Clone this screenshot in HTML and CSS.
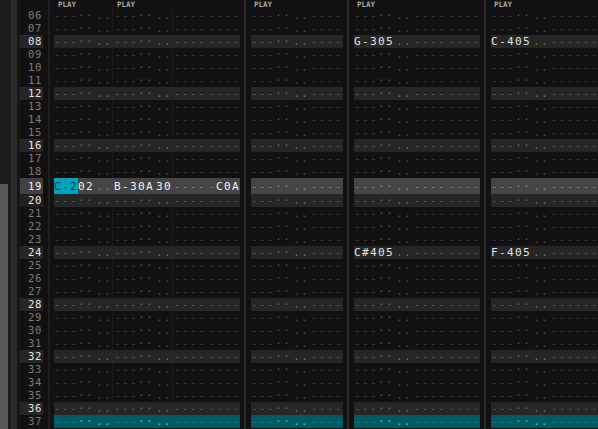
FILE: index.html
```html
<!DOCTYPE html>
<html>
<head>
<meta charset="utf-8">
<link rel="stylesheet" href="styles.css">
</head>
<body>
<div class="app">
  <div class="gut">
    <div class="sb"><div class="thumb"></div></div>
    <div class="strip"></div>
    <div class="dk"></div>
  </div>
  <div class="lines">
    <div class="hdr"></div>
    <div class="n">06</div><div class="n">07</div><div class="n hb">08</div><div class="n">09</div>
    <div class="n">10</div><div class="n">11</div><div class="n hb">12</div><div class="n">13</div>
    <div class="n">14</div><div class="n">15</div><div class="n hb">16</div><div class="n">17</div>
    <div class="n">18</div><div class="n hc">19</div><div class="n hb hd">20</div><div class="n">21</div>
    <div class="n">22</div><div class="n">23</div><div class="n hb">24</div><div class="n">25</div>
    <div class="n">26</div><div class="n">27</div><div class="n hb">28</div><div class="n">29</div>
    <div class="n">30</div><div class="n">31</div><div class="n hb">32</div><div class="n">33</div>
    <div class="n">34</div><div class="n">35</div><div class="n hb">36</div><div class="n">37</div>
  </div>
  <div class="lsep"></div>

  <div class="trk t1">
    <div class="hdr"><span class="ha">PLAY</span><span class="hx">PLAY</span></div>
    <div class="r">---<span class="m">··</span><span class="g"></span><span class="o">..</span><span class="s l"></span>---<span class="m">··</span><span class="g"></span><span class="o">..</span><span class="s l"></span>----<span class="g"></span>----</div>
    <div class="r">---<span class="m">··</span><span class="g"></span><span class="o">..</span><span class="s l"></span>---<span class="m">··</span><span class="g"></span><span class="o">..</span><span class="s l"></span>----<span class="g"></span>----</div>
    <div class="r b">---<span class="m">··</span><span class="g"></span><span class="o">..</span><span class="s l"></span>---<span class="m">··</span><span class="g"></span><span class="o">..</span><span class="s l"></span>----<span class="g"></span>----</div>
    <div class="r">---<span class="m">··</span><span class="g"></span><span class="o">..</span><span class="s l"></span>---<span class="m">··</span><span class="g"></span><span class="o">..</span><span class="s l"></span>----<span class="g"></span>----</div>
    <div class="r">---<span class="m">··</span><span class="g"></span><span class="o">..</span><span class="s l"></span>---<span class="m">··</span><span class="g"></span><span class="o">..</span><span class="s l"></span>----<span class="g"></span>----</div>
    <div class="r">---<span class="m">··</span><span class="g"></span><span class="o">..</span><span class="s l"></span>---<span class="m">··</span><span class="g"></span><span class="o">..</span><span class="s l"></span>----<span class="g"></span>----</div>
    <div class="r b">---<span class="m">··</span><span class="g"></span><span class="o">..</span><span class="s l"></span>---<span class="m">··</span><span class="g"></span><span class="o">..</span><span class="s l"></span>----<span class="g"></span>----</div>
    <div class="r">---<span class="m">··</span><span class="g"></span><span class="o">..</span><span class="s l"></span>---<span class="m">··</span><span class="g"></span><span class="o">..</span><span class="s l"></span>----<span class="g"></span>----</div>
    <div class="r">---<span class="m">··</span><span class="g"></span><span class="o">..</span><span class="s l"></span>---<span class="m">··</span><span class="g"></span><span class="o">..</span><span class="s l"></span>----<span class="g"></span>----</div>
    <div class="r">---<span class="m">··</span><span class="g"></span><span class="o">..</span><span class="s l"></span>---<span class="m">··</span><span class="g"></span><span class="o">..</span><span class="s l"></span>----<span class="g"></span>----</div>
    <div class="r b">---<span class="m">··</span><span class="g"></span><span class="o">..</span><span class="s l"></span>---<span class="m">··</span><span class="g"></span><span class="o">..</span><span class="s l"></span>----<span class="g"></span>----</div>
    <div class="r">---<span class="m">··</span><span class="g"></span><span class="o">..</span><span class="s l"></span>---<span class="m">··</span><span class="g"></span><span class="o">..</span><span class="s l"></span>----<span class="g"></span>----</div>
    <div class="r">---<span class="m">··</span><span class="g"></span><span class="o">..</span><span class="s l"></span>---<span class="m">··</span><span class="g"></span><span class="o">..</span><span class="s l"></span>----<span class="g"></span>----</div>
    <div class="r c"><span class="cc">C-2</span><span class="w">02</span><span class="g"></span><span class="o">..</span><span class="s l"></span><span class="w">B-30A</span><span class="g"></span><span class="w">30</span><span class="s l"></span>----<span class="g"></span>-<span class="w">C0A</span></div>
    <div class="r b">---<span class="m">··</span><span class="g"></span><span class="o">..</span><span class="s l"></span>---<span class="m">··</span><span class="g"></span><span class="o">..</span><span class="s l"></span>----<span class="g"></span>----</div>
    <div class="r">---<span class="m">··</span><span class="g"></span><span class="o">..</span><span class="s l"></span>---<span class="m">··</span><span class="g"></span><span class="o">..</span><span class="s l"></span>----<span class="g"></span>----</div>
    <div class="r">---<span class="m">··</span><span class="g"></span><span class="o">..</span><span class="s l"></span>---<span class="m">··</span><span class="g"></span><span class="o">..</span><span class="s l"></span>----<span class="g"></span>----</div>
    <div class="r">---<span class="m">··</span><span class="g"></span><span class="o">..</span><span class="s l"></span>---<span class="m">··</span><span class="g"></span><span class="o">..</span><span class="s l"></span>----<span class="g"></span>----</div>
    <div class="r b">---<span class="m">··</span><span class="g"></span><span class="o">..</span><span class="s l"></span>---<span class="m">··</span><span class="g"></span><span class="o">..</span><span class="s l"></span>----<span class="g"></span>----</div>
    <div class="r">---<span class="m">··</span><span class="g"></span><span class="o">..</span><span class="s l"></span>---<span class="m">··</span><span class="g"></span><span class="o">..</span><span class="s l"></span>----<span class="g"></span>----</div>
    <div class="r">---<span class="m">··</span><span class="g"></span><span class="o">..</span><span class="s l"></span>---<span class="m">··</span><span class="g"></span><span class="o">..</span><span class="s l"></span>----<span class="g"></span>----</div>
    <div class="r">---<span class="m">··</span><span class="g"></span><span class="o">..</span><span class="s l"></span>---<span class="m">··</span><span class="g"></span><span class="o">..</span><span class="s l"></span>----<span class="g"></span>----</div>
    <div class="r b">---<span class="m">··</span><span class="g"></span><span class="o">..</span><span class="s l"></span>---<span class="m">··</span><span class="g"></span><span class="o">..</span><span class="s l"></span>----<span class="g"></span>----</div>
    <div class="r">---<span class="m">··</span><span class="g"></span><span class="o">..</span><span class="s l"></span>---<span class="m">··</span><span class="g"></span><span class="o">..</span><span class="s l"></span>----<span class="g"></span>----</div>
    <div class="r">---<span class="m">··</span><span class="g"></span><span class="o">..</span><span class="s l"></span>---<span class="m">··</span><span class="g"></span><span class="o">..</span><span class="s l"></span>----<span class="g"></span>----</div>
    <div class="r">---<span class="m">··</span><span class="g"></span><span class="o">..</span><span class="s l"></span>---<span class="m">··</span><span class="g"></span><span class="o">..</span><span class="s l"></span>----<span class="g"></span>----</div>
    <div class="r b">---<span class="m">··</span><span class="g"></span><span class="o">..</span><span class="s l"></span>---<span class="m">··</span><span class="g"></span><span class="o">..</span><span class="s l"></span>----<span class="g"></span>----</div>
    <div class="r">---<span class="m">··</span><span class="g"></span><span class="o">..</span><span class="s l"></span>---<span class="m">··</span><span class="g"></span><span class="o">..</span><span class="s l"></span>----<span class="g"></span>----</div>
    <div class="r">---<span class="m">··</span><span class="g"></span><span class="o">..</span><span class="s l"></span>---<span class="m">··</span><span class="g"></span><span class="o">..</span><span class="s l"></span>----<span class="g"></span>----</div>
    <div class="r">---<span class="m">··</span><span class="g"></span><span class="o">..</span><span class="s l"></span>---<span class="m">··</span><span class="g"></span><span class="o">..</span><span class="s l"></span>----<span class="g"></span>----</div>
    <div class="r b">---<span class="m">··</span><span class="g"></span><span class="o">..</span><span class="s l"></span>---<span class="m">··</span><span class="g"></span><span class="o">..</span><span class="s l"></span>----<span class="g"></span>----</div>
    <div class="r p">---<span class="m">··</span><span class="g"></span><span class="o">..</span><span class="s l"></span>---<span class="m">··</span><span class="g"></span><span class="o">..</span><span class="s l"></span>----<span class="g"></span>----</div>
  </div>
  <div class="tsep"></div>

  <div class="trk t2">
    <div class="hdr"><span class="hx">PLAY</span></div>
    <div class="r">---<span class="m">··</span><span class="g"></span><span class="o">..</span><span class="s"></span>----</div>
    <div class="r">---<span class="m">··</span><span class="g"></span><span class="o">..</span><span class="s"></span>----</div>
    <div class="r b">---<span class="m">··</span><span class="g"></span><span class="o">..</span><span class="s"></span>----</div>
    <div class="r">---<span class="m">··</span><span class="g"></span><span class="o">..</span><span class="s"></span>----</div>
    <div class="r">---<span class="m">··</span><span class="g"></span><span class="o">..</span><span class="s"></span>----</div>
    <div class="r">---<span class="m">··</span><span class="g"></span><span class="o">..</span><span class="s"></span>----</div>
    <div class="r b">---<span class="m">··</span><span class="g"></span><span class="o">..</span><span class="s"></span>----</div>
    <div class="r">---<span class="m">··</span><span class="g"></span><span class="o">..</span><span class="s"></span>----</div>
    <div class="r">---<span class="m">··</span><span class="g"></span><span class="o">..</span><span class="s"></span>----</div>
    <div class="r">---<span class="m">··</span><span class="g"></span><span class="o">..</span><span class="s"></span>----</div>
    <div class="r b">---<span class="m">··</span><span class="g"></span><span class="o">..</span><span class="s"></span>----</div>
    <div class="r">---<span class="m">··</span><span class="g"></span><span class="o">..</span><span class="s"></span>----</div>
    <div class="r">---<span class="m">··</span><span class="g"></span><span class="o">..</span><span class="s"></span>----</div>
    <div class="r c">---<span class="m">··</span><span class="g"></span><span class="o">..</span><span class="s"></span>----</div>
    <div class="r b">---<span class="m">··</span><span class="g"></span><span class="o">..</span><span class="s"></span>----</div>
    <div class="r">---<span class="m">··</span><span class="g"></span><span class="o">..</span><span class="s"></span>----</div>
    <div class="r">---<span class="m">··</span><span class="g"></span><span class="o">..</span><span class="s"></span>----</div>
    <div class="r">---<span class="m">··</span><span class="g"></span><span class="o">..</span><span class="s"></span>----</div>
    <div class="r b">---<span class="m">··</span><span class="g"></span><span class="o">..</span><span class="s"></span>----</div>
    <div class="r">---<span class="m">··</span><span class="g"></span><span class="o">..</span><span class="s"></span>----</div>
    <div class="r">---<span class="m">··</span><span class="g"></span><span class="o">..</span><span class="s"></span>----</div>
    <div class="r">---<span class="m">··</span><span class="g"></span><span class="o">..</span><span class="s"></span>----</div>
    <div class="r b">---<span class="m">··</span><span class="g"></span><span class="o">..</span><span class="s"></span>----</div>
    <div class="r">---<span class="m">··</span><span class="g"></span><span class="o">..</span><span class="s"></span>----</div>
    <div class="r">---<span class="m">··</span><span class="g"></span><span class="o">..</span><span class="s"></span>----</div>
    <div class="r">---<span class="m">··</span><span class="g"></span><span class="o">..</span><span class="s"></span>----</div>
    <div class="r b">---<span class="m">··</span><span class="g"></span><span class="o">..</span><span class="s"></span>----</div>
    <div class="r">---<span class="m">··</span><span class="g"></span><span class="o">..</span><span class="s"></span>----</div>
    <div class="r">---<span class="m">··</span><span class="g"></span><span class="o">..</span><span class="s"></span>----</div>
    <div class="r">---<span class="m">··</span><span class="g"></span><span class="o">..</span><span class="s"></span>----</div>
    <div class="r b">---<span class="m">··</span><span class="g"></span><span class="o">..</span><span class="s"></span>----</div>
    <div class="r p">---<span class="m">··</span><span class="g"></span><span class="o">..</span><span class="s"></span>----</div>
  </div>
  <div class="tsep"></div>

  <div class="trk t3">
    <div class="hdr"><span class="hx">PLAY</span></div>
    <div class="r">---<span class="m">··</span><span class="g"></span><span class="o">..</span><span class="s"></span>----<span class="g"></span>----</div>
    <div class="r">---<span class="m">··</span><span class="g"></span><span class="o">..</span><span class="s"></span>----<span class="g"></span>----</div>
    <div class="r b"><span class="w">G-305</span><span class="g"></span><span class="o">..</span><span class="s"></span>----<span class="g"></span>----</div>
    <div class="r">---<span class="m">··</span><span class="g"></span><span class="o">..</span><span class="s"></span>----<span class="g"></span>----</div>
    <div class="r">---<span class="m">··</span><span class="g"></span><span class="o">..</span><span class="s"></span>----<span class="g"></span>----</div>
    <div class="r">---<span class="m">··</span><span class="g"></span><span class="o">..</span><span class="s"></span>----<span class="g"></span>----</div>
    <div class="r b">---<span class="m">··</span><span class="g"></span><span class="o">..</span><span class="s"></span>----<span class="g"></span>----</div>
    <div class="r">---<span class="m">··</span><span class="g"></span><span class="o">..</span><span class="s"></span>----<span class="g"></span>----</div>
    <div class="r">---<span class="m">··</span><span class="g"></span><span class="o">..</span><span class="s"></span>----<span class="g"></span>----</div>
    <div class="r">---<span class="m">··</span><span class="g"></span><span class="o">..</span><span class="s"></span>----<span class="g"></span>----</div>
    <div class="r b">---<span class="m">··</span><span class="g"></span><span class="o">..</span><span class="s"></span>----<span class="g"></span>----</div>
    <div class="r">---<span class="m">··</span><span class="g"></span><span class="o">..</span><span class="s"></span>----<span class="g"></span>----</div>
    <div class="r">---<span class="m">··</span><span class="g"></span><span class="o">..</span><span class="s"></span>----<span class="g"></span>----</div>
    <div class="r c">---<span class="m">··</span><span class="g"></span><span class="o">..</span><span class="s"></span>----<span class="g"></span>----</div>
    <div class="r b">---<span class="m">··</span><span class="g"></span><span class="o">..</span><span class="s"></span>----<span class="g"></span>----</div>
    <div class="r">---<span class="m">··</span><span class="g"></span><span class="o">..</span><span class="s"></span>----<span class="g"></span>----</div>
    <div class="r">---<span class="m">··</span><span class="g"></span><span class="o">..</span><span class="s"></span>----<span class="g"></span>----</div>
    <div class="r">---<span class="m">··</span><span class="g"></span><span class="o">..</span><span class="s"></span>----<span class="g"></span>----</div>
    <div class="r b"><span class="w">C#405</span><span class="g"></span><span class="o">..</span><span class="s"></span>----<span class="g"></span>----</div>
    <div class="r">---<span class="m">··</span><span class="g"></span><span class="o">..</span><span class="s"></span>----<span class="g"></span>----</div>
    <div class="r">---<span class="m">··</span><span class="g"></span><span class="o">..</span><span class="s"></span>----<span class="g"></span>----</div>
    <div class="r">---<span class="m">··</span><span class="g"></span><span class="o">..</span><span class="s"></span>----<span class="g"></span>----</div>
    <div class="r b">---<span class="m">··</span><span class="g"></span><span class="o">..</span><span class="s"></span>----<span class="g"></span>----</div>
    <div class="r">---<span class="m">··</span><span class="g"></span><span class="o">..</span><span class="s"></span>----<span class="g"></span>----</div>
    <div class="r">---<span class="m">··</span><span class="g"></span><span class="o">..</span><span class="s"></span>----<span class="g"></span>----</div>
    <div class="r">---<span class="m">··</span><span class="g"></span><span class="o">..</span><span class="s"></span>----<span class="g"></span>----</div>
    <div class="r b">---<span class="m">··</span><span class="g"></span><span class="o">..</span><span class="s"></span>----<span class="g"></span>----</div>
    <div class="r">---<span class="m">··</span><span class="g"></span><span class="o">..</span><span class="s"></span>----<span class="g"></span>----</div>
    <div class="r">---<span class="m">··</span><span class="g"></span><span class="o">..</span><span class="s"></span>----<span class="g"></span>----</div>
    <div class="r">---<span class="m">··</span><span class="g"></span><span class="o">..</span><span class="s"></span>----<span class="g"></span>----</div>
    <div class="r b">---<span class="m">··</span><span class="g"></span><span class="o">..</span><span class="s"></span>----<span class="g"></span>----</div>
    <div class="r p">---<span class="m">··</span><span class="g"></span><span class="o">..</span><span class="s"></span>----<span class="g"></span>----</div>
  </div>
  <div class="tsep"></div>

  <div class="trk t4">
    <div class="hdr"><span class="hx">PLAY</span></div>
    <div class="r">---<span class="m">··</span><span class="g"></span><span class="o">..</span><span class="s"></span>-----<span class="e">-</span></div>
    <div class="r">---<span class="m">··</span><span class="g"></span><span class="o">..</span><span class="s"></span>-----<span class="e">-</span></div>
    <div class="r b"><span class="w">C-405</span><span class="g"></span><span class="o">..</span><span class="s"></span>-----<span class="e">-</span></div>
    <div class="r">---<span class="m">··</span><span class="g"></span><span class="o">..</span><span class="s"></span>-----<span class="e">-</span></div>
    <div class="r">---<span class="m">··</span><span class="g"></span><span class="o">..</span><span class="s"></span>-----<span class="e">-</span></div>
    <div class="r">---<span class="m">··</span><span class="g"></span><span class="o">..</span><span class="s"></span>-----<span class="e">-</span></div>
    <div class="r b">---<span class="m">··</span><span class="g"></span><span class="o">..</span><span class="s"></span>-----<span class="e">-</span></div>
    <div class="r">---<span class="m">··</span><span class="g"></span><span class="o">..</span><span class="s"></span>-----<span class="e">-</span></div>
    <div class="r">---<span class="m">··</span><span class="g"></span><span class="o">..</span><span class="s"></span>-----<span class="e">-</span></div>
    <div class="r">---<span class="m">··</span><span class="g"></span><span class="o">..</span><span class="s"></span>-----<span class="e">-</span></div>
    <div class="r b">---<span class="m">··</span><span class="g"></span><span class="o">..</span><span class="s"></span>-----<span class="e">-</span></div>
    <div class="r">---<span class="m">··</span><span class="g"></span><span class="o">..</span><span class="s"></span>-----<span class="e">-</span></div>
    <div class="r">---<span class="m">··</span><span class="g"></span><span class="o">..</span><span class="s"></span>-----<span class="e">-</span></div>
    <div class="r c">---<span class="m">··</span><span class="g"></span><span class="o">..</span><span class="s"></span>-----<span class="e">-</span></div>
    <div class="r b">---<span class="m">··</span><span class="g"></span><span class="o">..</span><span class="s"></span>-----<span class="e">-</span></div>
    <div class="r">---<span class="m">··</span><span class="g"></span><span class="o">..</span><span class="s"></span>-----<span class="e">-</span></div>
    <div class="r">---<span class="m">··</span><span class="g"></span><span class="o">..</span><span class="s"></span>-----<span class="e">-</span></div>
    <div class="r">---<span class="m">··</span><span class="g"></span><span class="o">..</span><span class="s"></span>-----<span class="e">-</span></div>
    <div class="r b"><span class="w">F-405</span><span class="g"></span><span class="o">..</span><span class="s"></span>-----<span class="e">-</span></div>
    <div class="r">---<span class="m">··</span><span class="g"></span><span class="o">..</span><span class="s"></span>-----<span class="e">-</span></div>
    <div class="r">---<span class="m">··</span><span class="g"></span><span class="o">..</span><span class="s"></span>-----<span class="e">-</span></div>
    <div class="r">---<span class="m">··</span><span class="g"></span><span class="o">..</span><span class="s"></span>-----<span class="e">-</span></div>
    <div class="r b">---<span class="m">··</span><span class="g"></span><span class="o">..</span><span class="s"></span>-----<span class="e">-</span></div>
    <div class="r">---<span class="m">··</span><span class="g"></span><span class="o">..</span><span class="s"></span>-----<span class="e">-</span></div>
    <div class="r">---<span class="m">··</span><span class="g"></span><span class="o">..</span><span class="s"></span>-----<span class="e">-</span></div>
    <div class="r">---<span class="m">··</span><span class="g"></span><span class="o">..</span><span class="s"></span>-----<span class="e">-</span></div>
    <div class="r b">---<span class="m">··</span><span class="g"></span><span class="o">..</span><span class="s"></span>-----<span class="e">-</span></div>
    <div class="r">---<span class="m">··</span><span class="g"></span><span class="o">..</span><span class="s"></span>-----<span class="e">-</span></div>
    <div class="r">---<span class="m">··</span><span class="g"></span><span class="o">..</span><span class="s"></span>-----<span class="e">-</span></div>
    <div class="r">---<span class="m">··</span><span class="g"></span><span class="o">..</span><span class="s"></span>-----<span class="e">-</span></div>
    <div class="r b">---<span class="m">··</span><span class="g"></span><span class="o">..</span><span class="s"></span>-----<span class="e">-</span></div>
    <div class="r p">---<span class="m">··</span><span class="g"></span><span class="o">..</span><span class="s"></span>-----<span class="e">-</span></div>
  </div>
</div>
</body>
</html>
```

FILE: styles.css
```css
html, body {
  margin: 0;
  padding: 0;
  background: #111111;
}
body {
  width: 598px;
  height: 429px;
  overflow: hidden;
}
.app {
  display: flex;
  height: 429px;
  font-family: "DejaVu Sans Mono", monospace;
}

/* left gutter / scrollbar */
.gut {
  display: flex;
  flex: none;
  width: 20px;
}
.sb {
  width: 11px;
  background: #1c1c1c;
  display: flex;
  flex-direction: column;
}
.thumb {
  margin-top: 184px;
  width: 8px;
  flex: 1;
  background: #575757;
}
.strip {
  width: 6px;
  background: #2c2c2c;
}
.dk {
  width: 3px;
  background: #161616;
}

/* line numbers */
.lines {
  flex: none;
  width: 23px;
}
.hdr {
  height: 9px;
  line-height: 9px;
  font-size: 7.5px;
  font-weight: bold;
  color: #a8a8a8;
  display: flex;
  white-space: pre;
}
.n {
  height: 13px;
  line-height: 13px;
  font-size: 10.6px;
  letter-spacing: 0.6px;
  text-align: right;
  padding-right: 1px;
  color: #7a7a7a;
}
.n.hb {
  background: #262626;
  color: #e4e4e4;
}
.n.hd {
  background: #202020;
}
.n.hc {
  height: 16px;
  line-height: 17px;
  background: #414141;
  color: #f4f4f4;
}
.lsep {
  flex: none;
  width: 2px;
  margin: 0 4px 0 5px;
  background: #1e1e1e;
}
.tsep {
  flex: none;
  width: 2px;
  margin: 0 5px 0 4px;
  background: #2b2b2b;
}

/* tracks */
.trk {
  flex: none;
  display: flex;
  flex-direction: column;
}
.t1 { width: 186px; }
.t2 { width: 92px; }
.t3 { width: 126px; }
.t4 { width: 107px; }

.ha {
  width: 60px;
  padding-left: 4px;
  box-sizing: border-box;
}
.hx {
  padding-left: 3px;
}

.r {
  display: flex;
  height: 13px;
  line-height: 13.6px;
  font-size: 11.1px;
  letter-spacing: 1.317px;
  white-space: pre;
  color: #393939;
  overflow: hidden;
}
.m { color: #4e4e4e; }
.o { color: #4f4f1c; }
.w { color: #e2e2e2; }
.e { letter-spacing: 0; }
.s {
  flex: none;
  width: 2px;
  align-self: stretch;
}
.s.l {
  background: linear-gradient(#1b1b1b, #1b1b1b) no-repeat 0 0 / 1px 100%;
}
.g {
  flex: none;
  width: 2px;
}

/* beat rows */
.r.b {
  background: #262626;
  color: #565656;
}
.r.b .m { color: #6a6a6a; }
.r.b .o { color: #7a7a28; }
.r.b .s.l, .r.c .s.l, .r.p .s.l { background: none; }

/* cursor row */
.r.c {
  height: 16px;
  line-height: 17.6px;
  background: #454545;
  color: #7c7c7c;
}
.r.c .m { color: #8c8c8c; }
.r.c .o { color: #8a8a8a; }
.r.c .w { color: #f0f0f0; }
.cc {
  background: #00a3b8;
  color: #0b3d46;
}

/* playback row */
.r.p {
  background: #005a66;
  color: #2b7d88;
}
.r.p .m { color: #7fb3ba; }
.r.p .o { color: #7fb3ba; }
```
